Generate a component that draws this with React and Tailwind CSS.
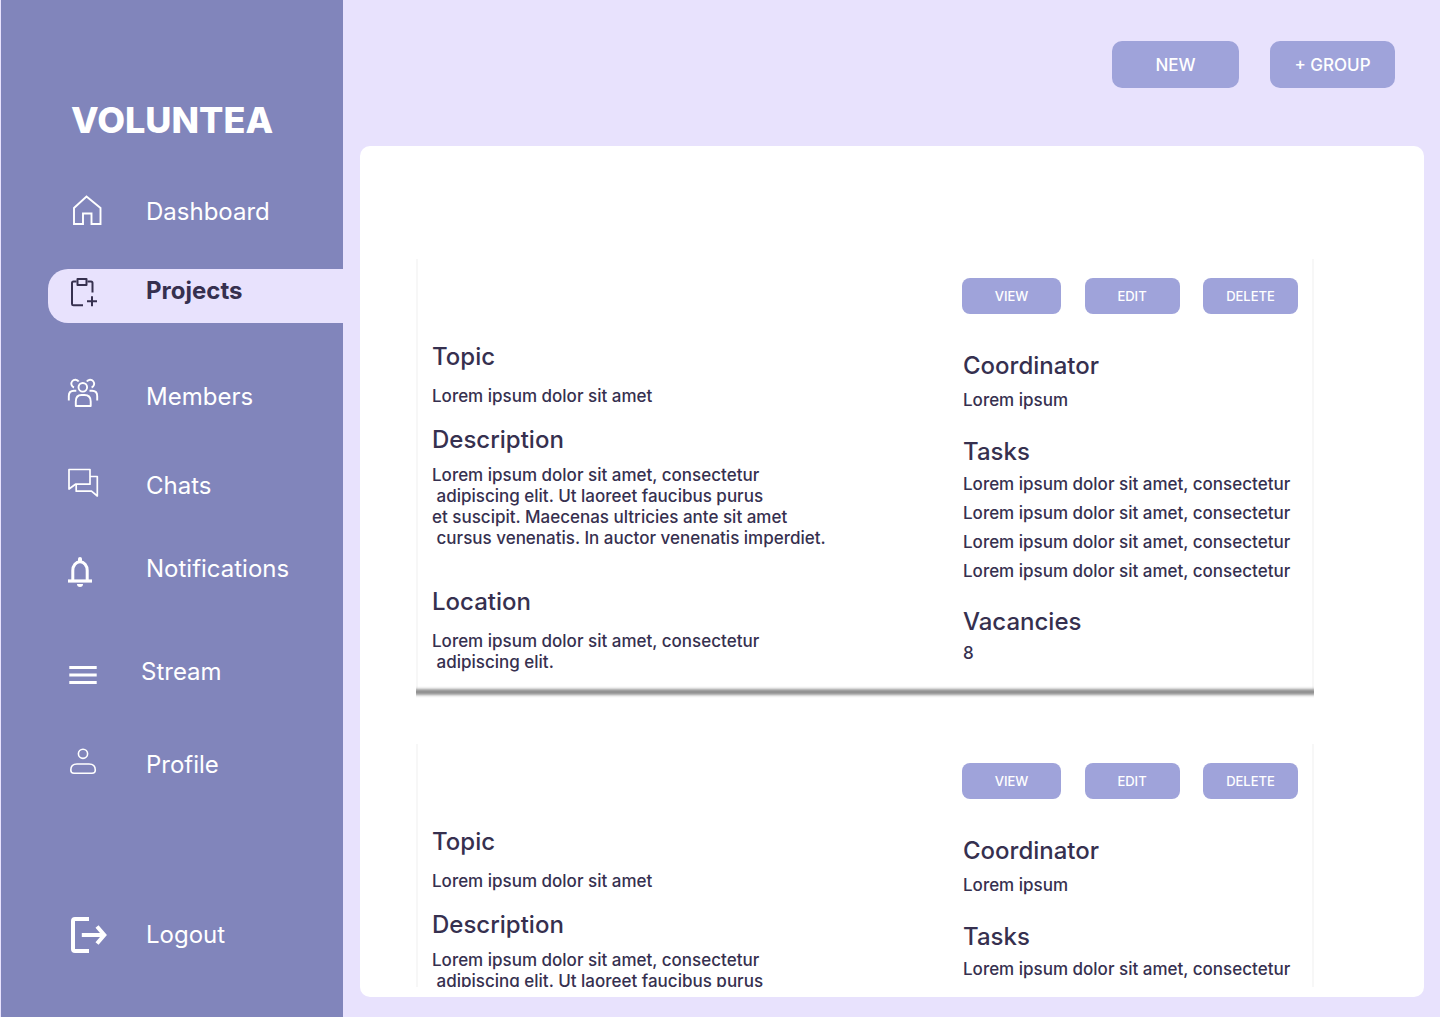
import React from "react";

const icons = {
  home: (
    <path d="M8 30V14L20.5 2.5L34.5 14V30H25.5V19.5H17V30Z" strokeWidth="1.9" />
  ),
  clipboard: (
    <g strokeWidth="2">
      <path d="M10.5 8.5H7.5Q6 8.5 6 10V31Q6 32.3 7.5 32.3H17" />
      <path d="M21.5 8.5H25Q26.5 8.5 26.5 10V19.5" />
      <path d="M11.5 6H20.5V12H11.5Z" strokeLinejoin="round" />
      <path d="M21 28.3H31M26 23.3V33.3" />
    </g>
  ),
  members: (
    <g strokeWidth="1.9">
      <circle cx="16.8" cy="8.3" r="4.3" />
      <path d="M9.8 27V22.5Q9.8 16 15.5 16H18.5Q24.7 16 24.7 22.5V27Z" strokeLinejoin="round" />
      <path d="M12.7 2.6A4 4 0 1 0 8 8.5" />
      <path d="M20.8 2.6A4 4 0 1 1 25.6 8.5" />
      <path d="M2.8 21.5V17Q2.8 11.7 8 11.7H10.3" />
      <path d="M31.2 21.5V17Q31.2 11.7 26 11.7H23.5" />
    </g>
  ),
  chats: (
    <g strokeWidth="1.7" strokeLinejoin="round">
      <path d="M3 1.5H24V16.2H9.5L3 21Z" />
      <path d="M24 8.5H31.3V28L25.5 23.2H10.2V16.2" />
    </g>
  ),
  bell: (
    <g>
      <path d="M6.8 29.5V19.5A7.2 8.8 0 0 1 21.2 19.5V29.5" strokeWidth="3" />
      <path d="M2 30H26" strokeWidth="3.2" />
      <path d="M12 10V8A2 2 0 0 1 16 8V10Z" fill="currentColor" stroke="none" />
      <path d="M11 33H17A3 3 0 0 1 11 33Z" fill="currentColor" stroke="none" />
    </g>
  ),
  stream: <path d="M3.3 13.5H30.7M3.3 21H30.7M3.3 28.5H30.7" strokeWidth="2.9" />,
  profile: (
    <g strokeWidth="1.6">
      <circle cx="17" cy="6.8" r="4.6" />
      <path d="M11 17H23Q29.3 17 29.3 23Q29.3 26.3 26 26.3H8Q4.8 26.3 4.8 23Q4.8 17 11 17Z" />
    </g>
  ),
  logout: (
    <g strokeWidth="4">
      <path d="M23 2H9Q7 2 7 4V32Q7 34 9 34H23" />
      <path d="M15.8 18H38M31 9.5L38.3 18L31 26.5" />
    </g>
  ),
};

function NavItem({ icon, label, className = "", gap = "gap-x-10" }) {
  return (
    <a href="#" className={`flex items-center pl-[65px] text-2xl leading-9 font-normal ${gap} ${className}`}>
      <svg
        viewBox="0 0 40 36"
        className="h-9 w-10 shrink-0 overflow-visible"
        fill="none"
        stroke="currentColor"
        aria-hidden="true"
      >
        {icons[icon]}
      </svg>
      <span>{label}</span>
    </a>
  );
}

function Sidebar() {
  return (
    <aside className="w-[343px] shrink-0 border-l border-[#e8e2fd] bg-[#8185bb] pt-[98px] text-white">
      <h1 className="pl-[70px] text-4xl leading-[44px] font-extrabold">VOLUNTEA</h1>
      <nav>
        <NavItem icon="home" label="Dashboard" className="mt-[52px]" />
        <div className="mt-[39px] pl-[47px]">
          <a
            href="#"
            aria-current="page"
            className="flex h-[54px] items-start gap-x-10 rounded-l-[20px] bg-[#e8e2fd] pt-1 pl-[18px] text-2xl leading-9 font-bold text-[#36304f]"
          >
            <svg
              viewBox="0 0 40 36"
              className="h-9 w-10 shrink-0 overflow-visible"
              fill="none"
              stroke="currentColor"
              aria-hidden="true"
            >
              {icons.clipboard}
            </svg>
            <span>Projects</span>
          </a>
        </div>
        <NavItem icon="members" label="Members" className="mt-14" />
        <NavItem icon="chats" label="Chats" className="mt-[53px]" />
        <NavItem icon="bell" label="Notifications" className="mt-[47px]" />
        <NavItem icon="stream" label="Stream" className="mt-[67px]" gap="gap-x-[35px]" />
        <NavItem icon="profile" label="Profile" className="mt-[57px]" />
        <NavItem icon="logout" label="Logout" className="mt-[134px]" />
      </nav>
    </aside>
  );
}

function SmallButton({ children, className }) {
  return (
    <button type="button" className={`h-9 rounded-lg bg-[#9fa3da] text-[13px] font-medium text-white ${className}`}>
      {children}
    </button>
  );
}

const task = "Lorem ipsum dolor sit amet, consectetur";
const tasks = [task, task, task, task];

const heading = "text-2xl leading-[30px]";

function ProjectCard() {
  return (
    <article>
      <div className="grid grid-cols-[1fr_336px] border-x-2 border-[#f7f7f7] px-3.5 pt-[19px] pb-[17px] text-[17px] leading-[21px] font-medium">
        <div className="pt-16">
          <h2 className={heading}>Topic</h2>
          <p className="mt-3.5">Lorem ipsum dolor sit amet</p>
          <h2 className={`mt-[18px] ${heading}`}>Description</h2>
          <p className="mt-2.5 whitespace-pre">
            {"Lorem ipsum dolor sit amet, consectetur\n adipiscing elit. Ut laoreet faucibus purus\net suscipit. Maecenas ultricies ante sit amet\n cursus venenatis. In auctor venenatis imperdiet."}
          </p>
          <h2 className={`mt-[38px] ${heading}`}>Location</h2>
          <p className="mt-3.5 whitespace-pre">
            {"Lorem ipsum dolor sit amet, consectetur\n adipiscing elit."}
          </p>
        </div>
        <div>
          <div className="flex justify-between">
            <SmallButton className="w-[99px]">VIEW</SmallButton>
            <SmallButton className="w-[95px]">EDIT</SmallButton>
            <SmallButton className="w-[95px]">DELETE</SmallButton>
          </div>
          <div className="pl-px">
            <h2 className={`mt-[37px] ${heading}`}>Coordinator</h2>
            <p className="mt-[9px]">Lorem ipsum</p>
            <h2 className={`mt-[26px] ${heading}`}>Tasks</h2>
            <ul className="mt-[7px] flex flex-col gap-2 whitespace-nowrap">
              {tasks.map((item, i) => (
                <li key={i}>{item}</li>
              ))}
            </ul>
            <h2 className={`mt-[25px] ${heading}`}>Vacancies</h2>
            <p className="mt-1.5">8</p>
          </div>
        </div>
      </div>
      <div className="my-px h-0.5 bg-[#939393] shadow-[0_0_3px_2px_#939393]" />
    </article>
  );
}

export default function App() {
  return (
    <div className="flex h-screen bg-[#e8e2fd] font-['Inter',sans-serif] text-[#36304f]">
      <Sidebar />
      <main className="flex min-w-0 flex-1 flex-col pr-4 pb-5 pl-[17px]">
        <header className="flex justify-end gap-[31px] pt-[41px] pr-[29px] pb-[58px] text-[17px] font-medium text-white">
          <button type="button" className="h-[47px] w-[127px] rounded-[10px] bg-[#9fa3da] pt-0.5">
            NEW
          </button>
          <button type="button" className="h-[47px] w-[125px] rounded-[10px] bg-[#9fa3da] pt-0.5">
            + GROUP
          </button>
        </header>
        <section className="flex min-h-0 flex-1 flex-col rounded-[10px] bg-white pt-[113px] pr-[110px] pb-2.5 pl-14">
          <div className="flex min-h-0 flex-1 flex-col gap-[50px] overflow-y-auto [scrollbar-width:none]">
            <ProjectCard />
            <ProjectCard />
          </div>
        </section>
      </main>
    </div>
  );
}
